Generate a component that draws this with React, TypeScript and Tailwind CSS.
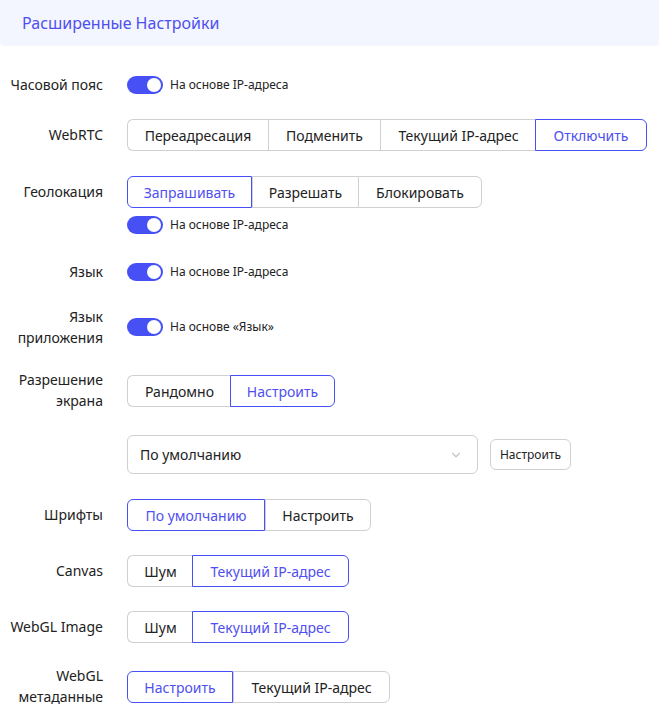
import { ChevronDown } from 'lucide-react'

const font = { fontFamily: '"Segoe UI", "Noto Sans", "Open Sans", sans-serif' }

function Toggle({ text }: { text: string }) {
  return (
    <div className="flex items-center gap-[7px] h-[18px]">
      <span className="relative w-[36px] h-[18px] rounded-full bg-[#4650f5] shrink-0">
        <span className="absolute right-[2px] top-[2px] w-[14px] h-[14px] rounded-full bg-white" />
      </span>
      <span className="text-[12px] text-[#222]">{text}</span>
    </div>
  )
}

function Segmented({ items, active, widths }: { items: string[]; active: number; widths: number[] }) {
  return (
    <div className="flex h-[32px]">
      {items.map((it, i) => {
        const first = i === 0
        const last = i === items.length - 1
        const on = i === active
        return (
          <div
            key={it}
            style={{ width: widths[i] }}
            className={`relative flex items-center justify-center text-[14px] border-y border-[#cfcfd4] ${
              first ? 'rounded-l-[6px] border-l' : ''
            } ${last ? 'rounded-r-[6px] border-r' : ''} ${!first ? 'border-l' : ''} ${
              on ? 'text-[#4f4ff0] !border-[#4650f5] border z-10' : 'text-[#222]'
            } ${on && !first ? '-ml-px' : ''}`}
          >
            {it}
          </div>
        )
      })}
    </div>
  )
}

function Row({ label, children, top = 'pt-[0px]' }: { label: React.ReactNode; children: React.ReactNode; top?: string }) {
  return (
    <div className="flex">
      <div className={`w-[103px] text-right text-[14px] leading-[21px] text-[#222] shrink-0 ${top}`}>{label}</div>
      <div className="ml-[24px] flex flex-col">{children}</div>
    </div>
  )
}

export default function App() {
  return (
    <div className="w-[659px] h-[714px] bg-white overflow-hidden" style={font}>
      <div className="h-[46px] bg-[#f3f6fe] flex items-center pl-[22px] rounded-b-[4px]">
        <span className="text-[16px] text-[#4f4ff0]">Расширенные Настройки</span>
      </div>

      <div className="mt-[28px]">
        <Row label="Часовой пояс">
          <div className="h-[21px] flex items-center">
            <Toggle text="На основе IP-адреса" />
          </div>
        </Row>
      </div>

      <div className="mt-[24px]">
        <Row label="WebRTC" top="pt-[5px]">
          <Segmented
            items={['Переадресация', 'Подменить', 'Текущий IP-адрес', 'Отключить']}
            active={3}
            widths={[141, 112, 156, 112]}
          />
        </Row>
      </div>

      <div className="mt-[25px]">
        <Row label="Геолокация" top="pt-[5px]">
          <Segmented items={['Запрашивать', 'Разрешать', 'Блокировать']} active={0} widths={[125, 106, 124]} />
          <div className="mt-[8px]">
            <Toggle text="На основе IP-адреса" />
          </div>
        </Row>
      </div>

      <div className="mt-[27px]">
        <Row label="Язык">
          <div className="h-[21px] flex items-center">
            <Toggle text="На основе IP-адреса" />
          </div>
        </Row>
      </div>

      <div className="mt-[24px]">
        <Row label={<>Язык<br />приложения</>}>
          <div className="h-[42px] flex items-center">
            <Toggle text="На основе «Язык»" />
          </div>
        </Row>
      </div>

      <div className="mt-[21px]">
        <Row label={<>Разрешение<br />экрана</>}>
          <div className="pt-[6px]">
            <Segmented items={['Рандомно', 'Настроить']} active={1} widths={[104, 105]} />
          </div>
          <div className="mt-[28px] flex items-center">
            <div className="w-[351px] h-[39px] rounded-[6px] border border-[#cfcfd4] flex items-center justify-between pl-[12px] pr-[14px]">
              <span className="text-[14px] text-[#222]">По умолчанию</span>
              <ChevronDown size={14} strokeWidth={2} className="text-[#c4c4c8]" />
            </div>
            <div className="ml-[12px] w-[81px] h-[31px] rounded-[6px] border border-[#cfcfd4] flex items-center justify-center text-[12px] text-[#222]">
              Настроить
            </div>
          </div>
        </Row>
      </div>

      <div className="mt-[25px]">
        <Row label="Шрифты" top="pt-[5px]">
          <Segmented items={['По умолчанию', 'Настроить']} active={0} widths={[138, 106]} />
        </Row>
      </div>

      <div className="mt-[24px]">
        <Row label="Canvas" top="pt-[5px]">
          <Segmented items={['Шум', 'Текущий IP-адрес']} active={1} widths={[66, 157]} />
        </Row>
      </div>

      <div className="mt-[24px]">
        <Row label="WebGL Image" top="pt-[5px]">
          <Segmented items={['Шум', 'Текущий IP-адрес']} active={1} widths={[66, 157]} />
        </Row>
      </div>

      <div className="mt-[22px]">
        <Row label={<>WebGL<br />метаданные</>}>
          <div className="pt-[6px]">
            <Segmented items={['Настроить', 'Текущий IP-адрес']} active={0} widths={[106, 157]} />
          </div>
        </Row>
      </div>
    </div>
  )
}
